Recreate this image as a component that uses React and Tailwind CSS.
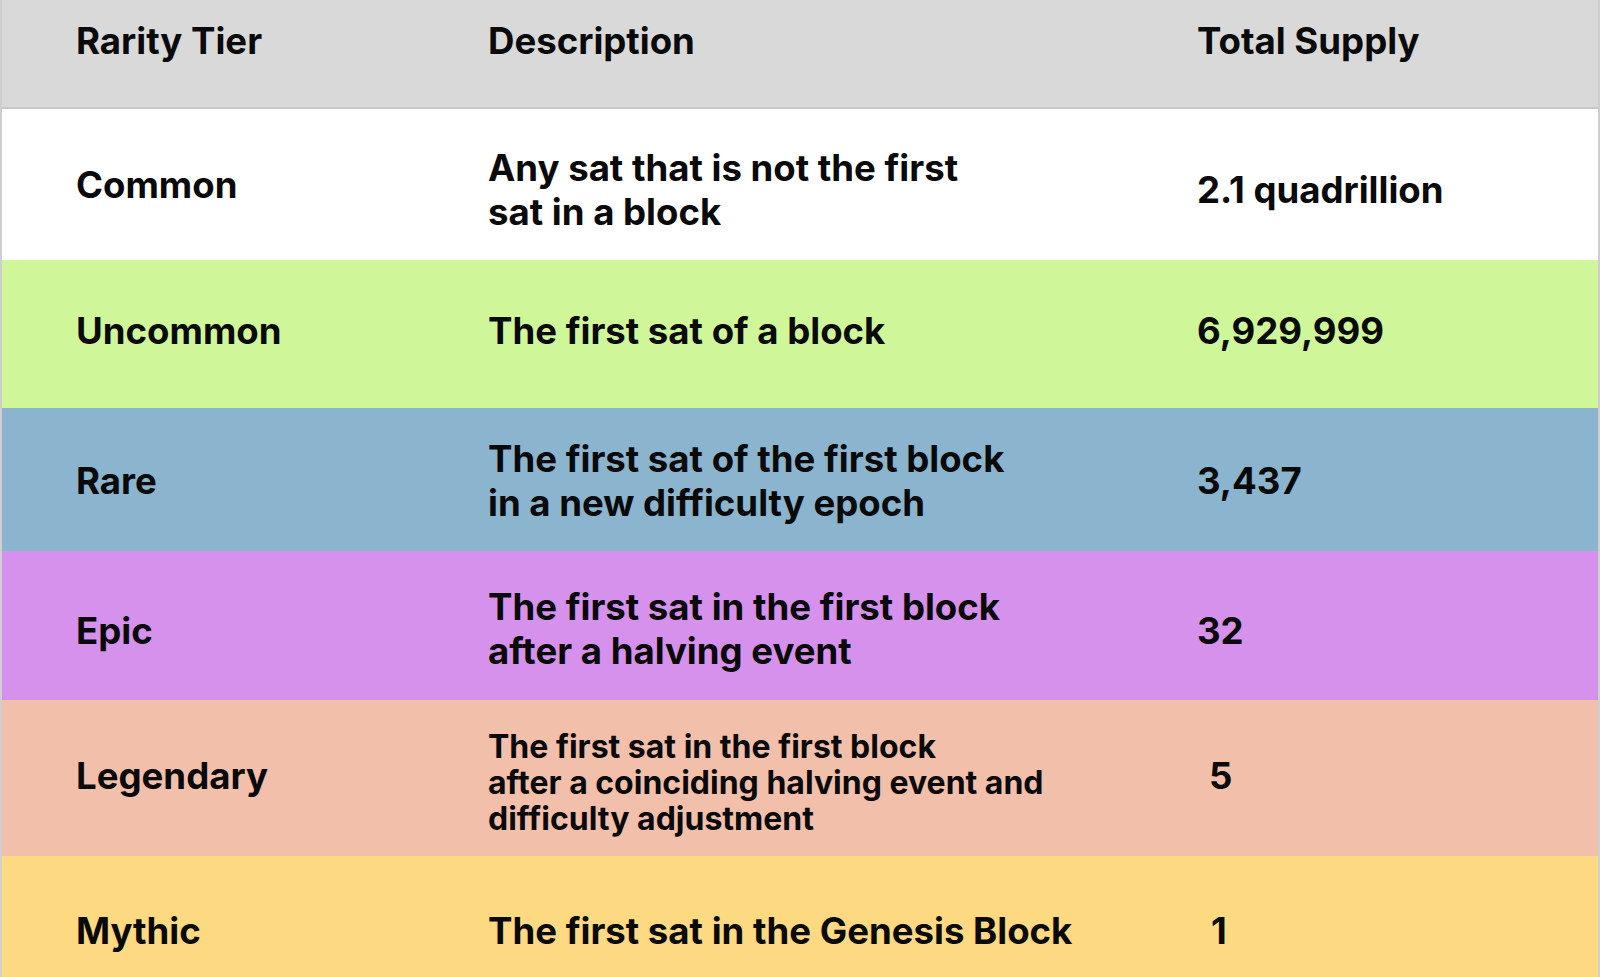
import React from "react";

const rows = [
  {
    tier: "Common",
    desc: ["Any sat that is not the first", "sat in a block"],
    supply: "2.1 quadrillion",
    bg: "bg-white",
    h: "h-[151px]",
    tierCls: "",
    descCls: "mt-[10px]",
    supplyCls: "mt-[10px]",
  },
  {
    tier: "Uncommon",
    desc: ["The first sat of a block"],
    supply: "6,929,999",
    bg: "bg-[#cff799]",
    h: "h-[148px]",
    tierCls: "mb-[6px]",
    descCls: "mb-[6px]",
    supplyCls: "mb-[6px]",
  },
  {
    tier: "Rare",
    desc: ["The first sat of the first block", "in a new difficulty epoch"],
    supply: "3,437",
    bg: "bg-[#8bb4ce]",
    h: "h-[143px]",
    tierCls: "mt-[2px]",
    descCls: "mt-[3px]",
    supplyCls: "mt-[2px]",
  },
  {
    tier: "Epic",
    desc: ["The first sat in the first block", "after a halving event"],
    supply: "32",
    bg: "bg-[#d591eb]",
    h: "h-[149px]",
    tierCls: "mt-[10px]",
    descCls: "mt-[7px]",
    supplyCls: "mt-[10px]",
  },
  {
    tier: "Legendary",
    desc: [
      "The first sat in the first block",
      "after a coinciding halving event and",
      "difficulty adjustment",
    ],
    supply: "5",
    bg: "bg-[#f2bfab]",
    h: "h-[156px]",
    small: true,
    tierCls: "mb-[4px]",
    descCls: "mt-[10px]",
    supplyCls: "mb-[4px] pl-[12px]",
  },
  {
    tier: "Mythic",
    desc: ["The first sat in the Genesis Block"],
    supply: "1",
    bg: "bg-[#fdd981]",
    h: "h-[150px]",
    tierCls: "",
    descCls: "",
    supplyCls: "pl-[14px]",
  },
];

export default function App() {
  return (
    <div
      className="w-[1600px] h-[977px] overflow-hidden border-x-2 border-[#cfcfcf] text-[#0a0a0a] font-bold"
      style={{ fontFamily: "Inter, 'Liberation Sans', sans-serif" }}
    >
      {/* Header */}
      <div className="grid grid-cols-[412px_709px_1fr] pl-[74px] h-[109px] bg-[#d9d9d9] border-b-2 border-[#c9c9c9] pt-[19px] text-[36.6px] leading-[44px]">
        <div>Rarity Tier</div>
        <div>Description</div>
        <div>Total Supply</div>
      </div>

      {rows.map((r) => (
        <div
          key={r.tier}
          className={`grid grid-cols-[412px_709px_1fr] pl-[74px] items-center ${r.bg} ${r.h} text-[36.6px]`}
        >
          <div className={`leading-[44px] ${r.tierCls}`}>{r.tier}</div>
          <div
            className={`${r.small ? "text-[32px] leading-[36px]" : "leading-[44px]"} ${r.descCls}`}
          >
            {r.desc.map((line) => (
              <div key={line}>{line}</div>
            ))}
          </div>
          <div className={`leading-[44px] ${r.supplyCls}`}>{r.supply}</div>
        </div>
      ))}
    </div>
  );
}
